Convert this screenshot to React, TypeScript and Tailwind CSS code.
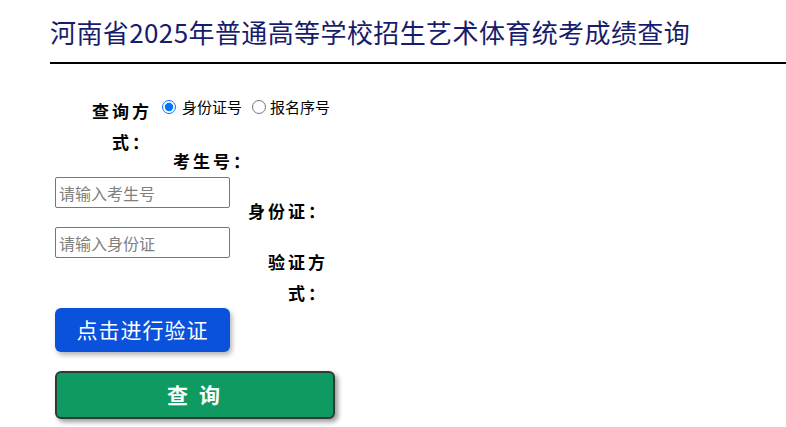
import React from "react";

export default function App() {
  return (
    <div className="w-[786px] h-[427px] overflow-hidden bg-white font-['Noto_Sans_CJK_SC','Noto_Sans',sans-serif] text-black">
      <div className="pl-[50px]">
        <h1 className="pt-[13px] text-[26px] leading-[38px] font-normal tracking-[0.4px] text-[#171d6c]">
          河南省2025年普通高等学校招生艺术体育统考成绩查询
        </h1>
        <div className="mt-[11px] h-[2px] bg-black" />
      </div>

      <div className="pl-[55px] mt-[31px] flex flex-col items-start">
        {/* query type row */}
        <div className="flex items-start">
          <div className="ml-[17px] w-[80px] text-right text-[17px] font-bold tracking-[3px] leading-[31px]">
            查询方
            <br />
            式：
          </div>
          <div className="ml-[10px] mt-[2px] flex items-center h-[20px] text-[15px]">
            <input
              type="radio"
              name="qtype"
              defaultChecked
              className="m-0 w-[14px] h-[14px]"
            />
            <span className="ml-[6px]">身份证号</span>
            <input type="radio" name="qtype" className="m-0 ml-[10px] w-[14px] h-[14px]" />
            <span className="ml-[4px]">报名序号</span>
          </div>
        </div>

        {/* exam number label */}
        <div className="-mt-[12px] ml-[118px] text-[17px] font-bold tracking-[3px] leading-[31px]">
          考生号：
        </div>

        {/* exam number input + id label */}
        <div className="mt-[1px] flex items-start">
          <input
            type="text"
            placeholder="请输入考生号"
            className="w-[175px] h-[31px] border border-[#767676] rounded-[2px] px-[3px] text-[16px] placeholder:text-[#808080] outline-none"
          />
          <div className="ml-[18px] mt-[18px] text-[17px] font-bold tracking-[3px] leading-[31px]">
            身份证：
          </div>
        </div>

        {/* id input + verify label */}
        <div className="mt-[1px] flex items-start">
          <input
            type="text"
            placeholder="请输入身份证"
            className="w-[175px] h-[31px] border border-[#767676] rounded-[2px] px-[3px] text-[16px] placeholder:text-[#808080] outline-none"
          />
          <div className="ml-[18px] mt-[19px] w-[80px] text-right text-[17px] font-bold tracking-[3px] leading-[31px]">
            验证方
            <br />
            式：
          </div>
        </div>

        <button className="w-[175px] h-[44px] rounded-[6px] bg-[#0a52dc] text-white text-[21px] tracking-[1px] shadow-[2px_3px_5px_rgba(0,0,0,0.3)] flex items-center justify-center">
          点击进行验证
        </button>

        <button className="mt-[19px] w-[280px] h-[48px] rounded-[6px] border-2 border-[#2f3a35] bg-[#0f9a62] text-white text-[21px] font-bold tracking-[3px] shadow-[3px_3px_5px_rgba(0,0,0,0.4)] flex items-center justify-center">
          查 询
        </button>
      </div>
    </div>
  );
}
